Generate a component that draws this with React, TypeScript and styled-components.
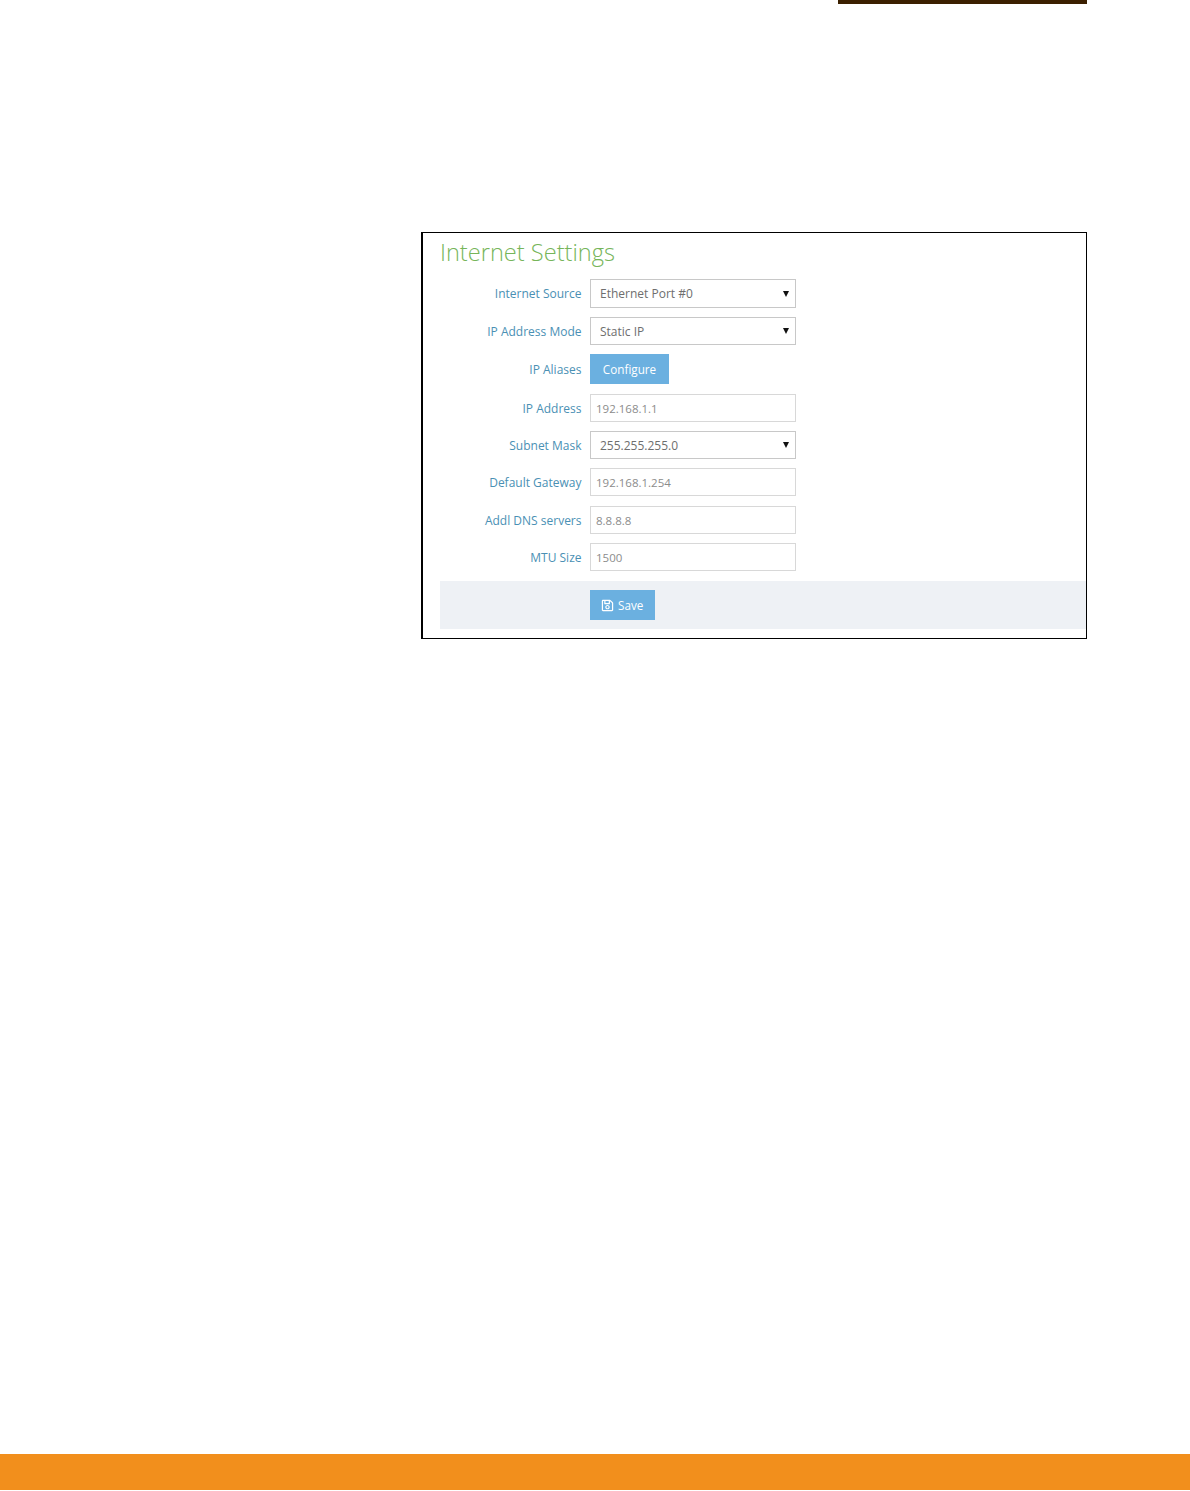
import React from 'react';
import styled, { createGlobalStyle } from 'styled-components';
import { FaRegSave } from 'react-icons/fa';

const GlobalStyle = createGlobalStyle`
  html, body {
    margin: 0;
    padding: 0;
    background: #fff;
  }
  body {
    font-family: "Open Sans", "Liberation Sans", sans-serif;
  }
`;

const Page = styled.div`
  width: 1190px;
  height: 1491px;
  display: flex;
  flex-direction: column;
`;

const TopStrip = styled.div`
  width: 249px;
  height: 4px;
  margin-left: 838px;
  background: #3b2000;
`;

const Frame = styled.section`
  box-sizing: border-box;
  width: 666px;
  height: 407px;
  margin: 228px 0 0 421px;
  padding: 0 0 9px 17px;
  border: 1px solid #000;
  border-left-width: 2px;
`;

const Title = styled.h1`
  margin: 0;
  height: 46px;
  font-size: 23.6px;
  line-height: 38px;
  font-weight: 300;
  color: #76b55a;
`;

const Row = styled.div<{ $after?: number; $height?: number }>`
  display: flex;
  align-items: center;
  gap: 8.5px;
  height: ${({ $height }) => $height ?? 28}px;
  margin-bottom: ${({ $after }) => $after ?? 9}px;
`;

const Label = styled.label`
  width: 141.5px;
  text-align: right;
  font-size: 12px;
  color: #4a90b4;
  white-space: nowrap;
`;

const Field = styled.div<{ $select?: boolean; $height?: number }>`
  box-sizing: border-box;
  width: 206px;
  height: ${({ $height }) => $height ?? 28}px;
  display: flex;
  align-items: center;
  justify-content: space-between;
  padding: ${({ $select }) => ($select ? '0 6px 0 9px' : '0 5px')};
  border: 1px solid ${({ $select }) => ($select ? '#c8c8c8' : '#d8d8d8')};
  background: #fff;
  font-size: ${({ $select }) => ($select ? 12 : 11.5)}px;
  color: ${({ $select }) => ($select ? '#6e6e6e' : '#8c8c8c')};
`;

const Arrow = styled.span`
  width: 0;
  height: 0;
  border-left: 3px solid transparent;
  border-right: 3px solid transparent;
  border-top: 6px solid #111;
`;

const Button = styled.button<{ $width: number }>`
  box-sizing: border-box;
  width: ${({ $width }) => $width}px;
  height: 30px;
  display: flex;
  align-items: center;
  justify-content: center;
  padding: 0;
  border: none;
  background: #6bb0e0;
  color: #fff;
  font-family: inherit;
  font-size: 11.7px;
`;

const SaveButton = styled(Button)`
  justify-content: flex-start;
  gap: 4px;
  padding-left: 11px;
`;

const SaveBar = styled.div`
  height: 48px;
  display: flex;
  align-items: center;
  padding-left: 150px;
  background: #eef1f5;
`;

const OrangeFooter = styled.footer`
  height: 36px;
  margin-top: auto;
  margin-bottom: 1px;
  background: #f28f1c;
`;

const rows = [
  { label: 'IP Address', value: '192.168.1.1' },
  { label: 'Subnet Mask', value: '255.255.255.0', select: true },
  { label: 'Default Gateway', value: '192.168.1.254', after: 10 },
  { label: 'Addl DNS servers', value: '8.8.8.8' },
  { label: 'MTU Size', value: '1500', after: 10 },
];

export default function App() {
  return (
    <Page>
      <GlobalStyle />
      <TopStrip />
      <Frame>
        <Title>Internet Settings</Title>
        <Row $height={29}>
          <Label>Internet Source</Label>
          <Field $select $height={29}>
            Ethernet Port #0
            <Arrow />
          </Field>
        </Row>
        <Row>
          <Label>IP Address Mode</Label>
          <Field $select>
            Static IP
            <Arrow />
          </Field>
        </Row>
        <Row $height={30} $after={10}>
          <Label>IP Aliases</Label>
          <Button $width={79}>Configure</Button>
        </Row>
        {rows.map((row) => (
          <Row key={row.label} $after={row.after}>
            <Label>{row.label}</Label>
            <Field $select={row.select}>
              {row.value}
              {row.select && <Arrow />}
            </Field>
          </Row>
        ))}
        <SaveBar>
          <SaveButton $width={65}>
            <FaRegSave size={13} />
            Save
          </SaveButton>
        </SaveBar>
      </Frame>
      <OrangeFooter />
    </Page>
  );
}
